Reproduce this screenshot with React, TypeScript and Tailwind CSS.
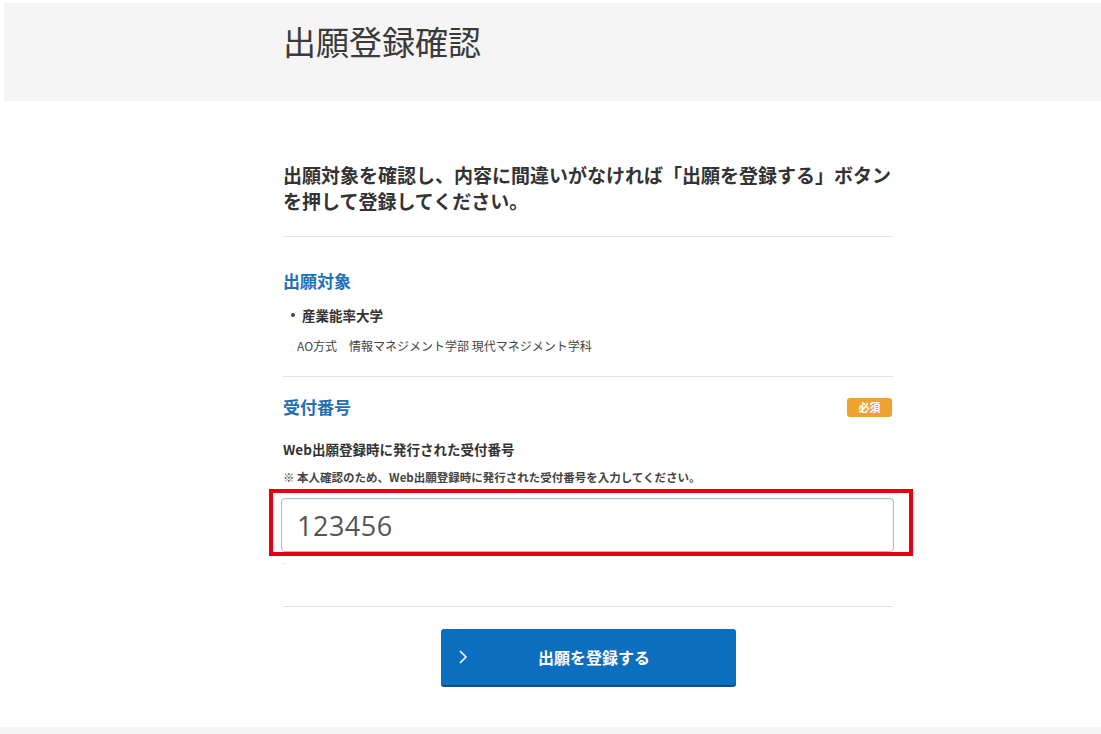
const jp = "font-['Noto_Sans_CJK_JP','Noto_Sans',sans-serif]";

function Divider() {
  return <div className="h-px bg-[#e3e3e3]" />;
}

export default function App() {
  return (
    <div className={`min-h-[734px] bg-white text-[#333] ${jp} flex flex-col`}>
      <header className="mt-[3px] ml-[4px] h-[98px] bg-[#f5f5f5] pt-[16px]">
        <h1 className="ml-[279px] text-[33px] font-normal leading-[44px] text-[#3a3a3a]">出願登録確認</h1>
      </header>

      <main className="ml-[283px] w-[610px] flex-1 pt-[61px]">
        <p className="text-[19px] font-bold leading-[26px] text-[#333]">
          出願対象を確認し、内容に間違いがなければ「出願を登録する」ボタンを押して登録してください。
        </p>
        <div className="mt-[22px]">
          <Divider />
        </div>

        <section className="pt-[31px] pb-[21px]">
          <h2 className="text-[17px] font-bold leading-[26px] text-[#1f6fb9]">出願対象</h2>
          <ul className="mt-[11px]">
            <li className="flex items-center gap-[7px] text-[13.5px] font-bold leading-[20px] pl-[8px]">
              <span className="inline-block h-[4px] w-[4px] rounded-full bg-[#444]" />
              産業能率大学
            </li>
          </ul>
          <p className="mt-[12px] pl-[14px] text-[12px] leading-[18px] text-[#444]">
            AO方式　情報マネジメント学部 現代マネジメント学科
          </p>
        </section>

        <Divider />

        <section className="pt-[17px]">
          <div className="flex items-center justify-between">
            <h2 className="text-[17px] font-bold leading-[26px] text-[#1f6fb9]">受付番号</h2>
            <span className="mr-px flex h-[19px] w-[45px] items-center justify-center rounded-[3px] bg-[#f0a22e] text-[11px] font-bold text-white">
              必須
            </span>
          </div>
          <p className="mt-[19px] text-[13.5px] font-bold leading-[20px]">Web出願登録時に発行された受付番号</p>
          <p className="mt-[9px] text-[11.5px] font-bold leading-[18px] text-[#444]">
            ※ 本人確認のため、Web出願登録時に発行された受付番号を入力してください。
          </p>

          <div className="relative mt-[12px] -ml-[2px] mr-[-1px]">
            <div className="flex h-[54px] items-center rounded-[4px] border border-[#9cc2e2] bg-white pl-[15px] shadow-[inset_0_1px_2px_rgba(0,0,0,0.06)]">
              <span className="font-['Open_Sans','Noto_Sans',sans-serif] text-[27px] leading-none tracking-[0.5px] text-[#555]">
                123456
              </span>
            </div>
            <div className="pointer-events-none absolute -left-[12px] -right-[19px] -top-[9px] -bottom-[4px] border-[4px] border-[#e60012]" />
          </div>
          <div className="mt-[11px] ml-[1px] h-[1px] w-[1px] bg-[#bbb]" />
        </section>

        <div className="mt-[42px]">
          <Divider />
        </div>

        <div className="flex justify-center pt-[22px] pb-[42px]">
          <button className="relative flex h-[56px] w-[295px] items-center justify-center rounded-[3px] bg-[#0b6ebf] text-[16px] font-bold text-white shadow-[0_2px_0_#0a4f8a]">
            <svg
              className="absolute left-[17px] top-1/2 -translate-y-1/2"
              width="10"
              height="16"
              viewBox="0 0 10 16"
              fill="none"
              stroke="white"
              strokeWidth="1.6"
            >
              <path d="M2 2l6 6-6 6" />
            </svg>
            <span className="ml-[12px]">出願を登録する</span>
          </button>
        </div>
      </main>

      <footer className="h-[8px] bg-[#f5f5f5]" />
    </div>
  );
}
